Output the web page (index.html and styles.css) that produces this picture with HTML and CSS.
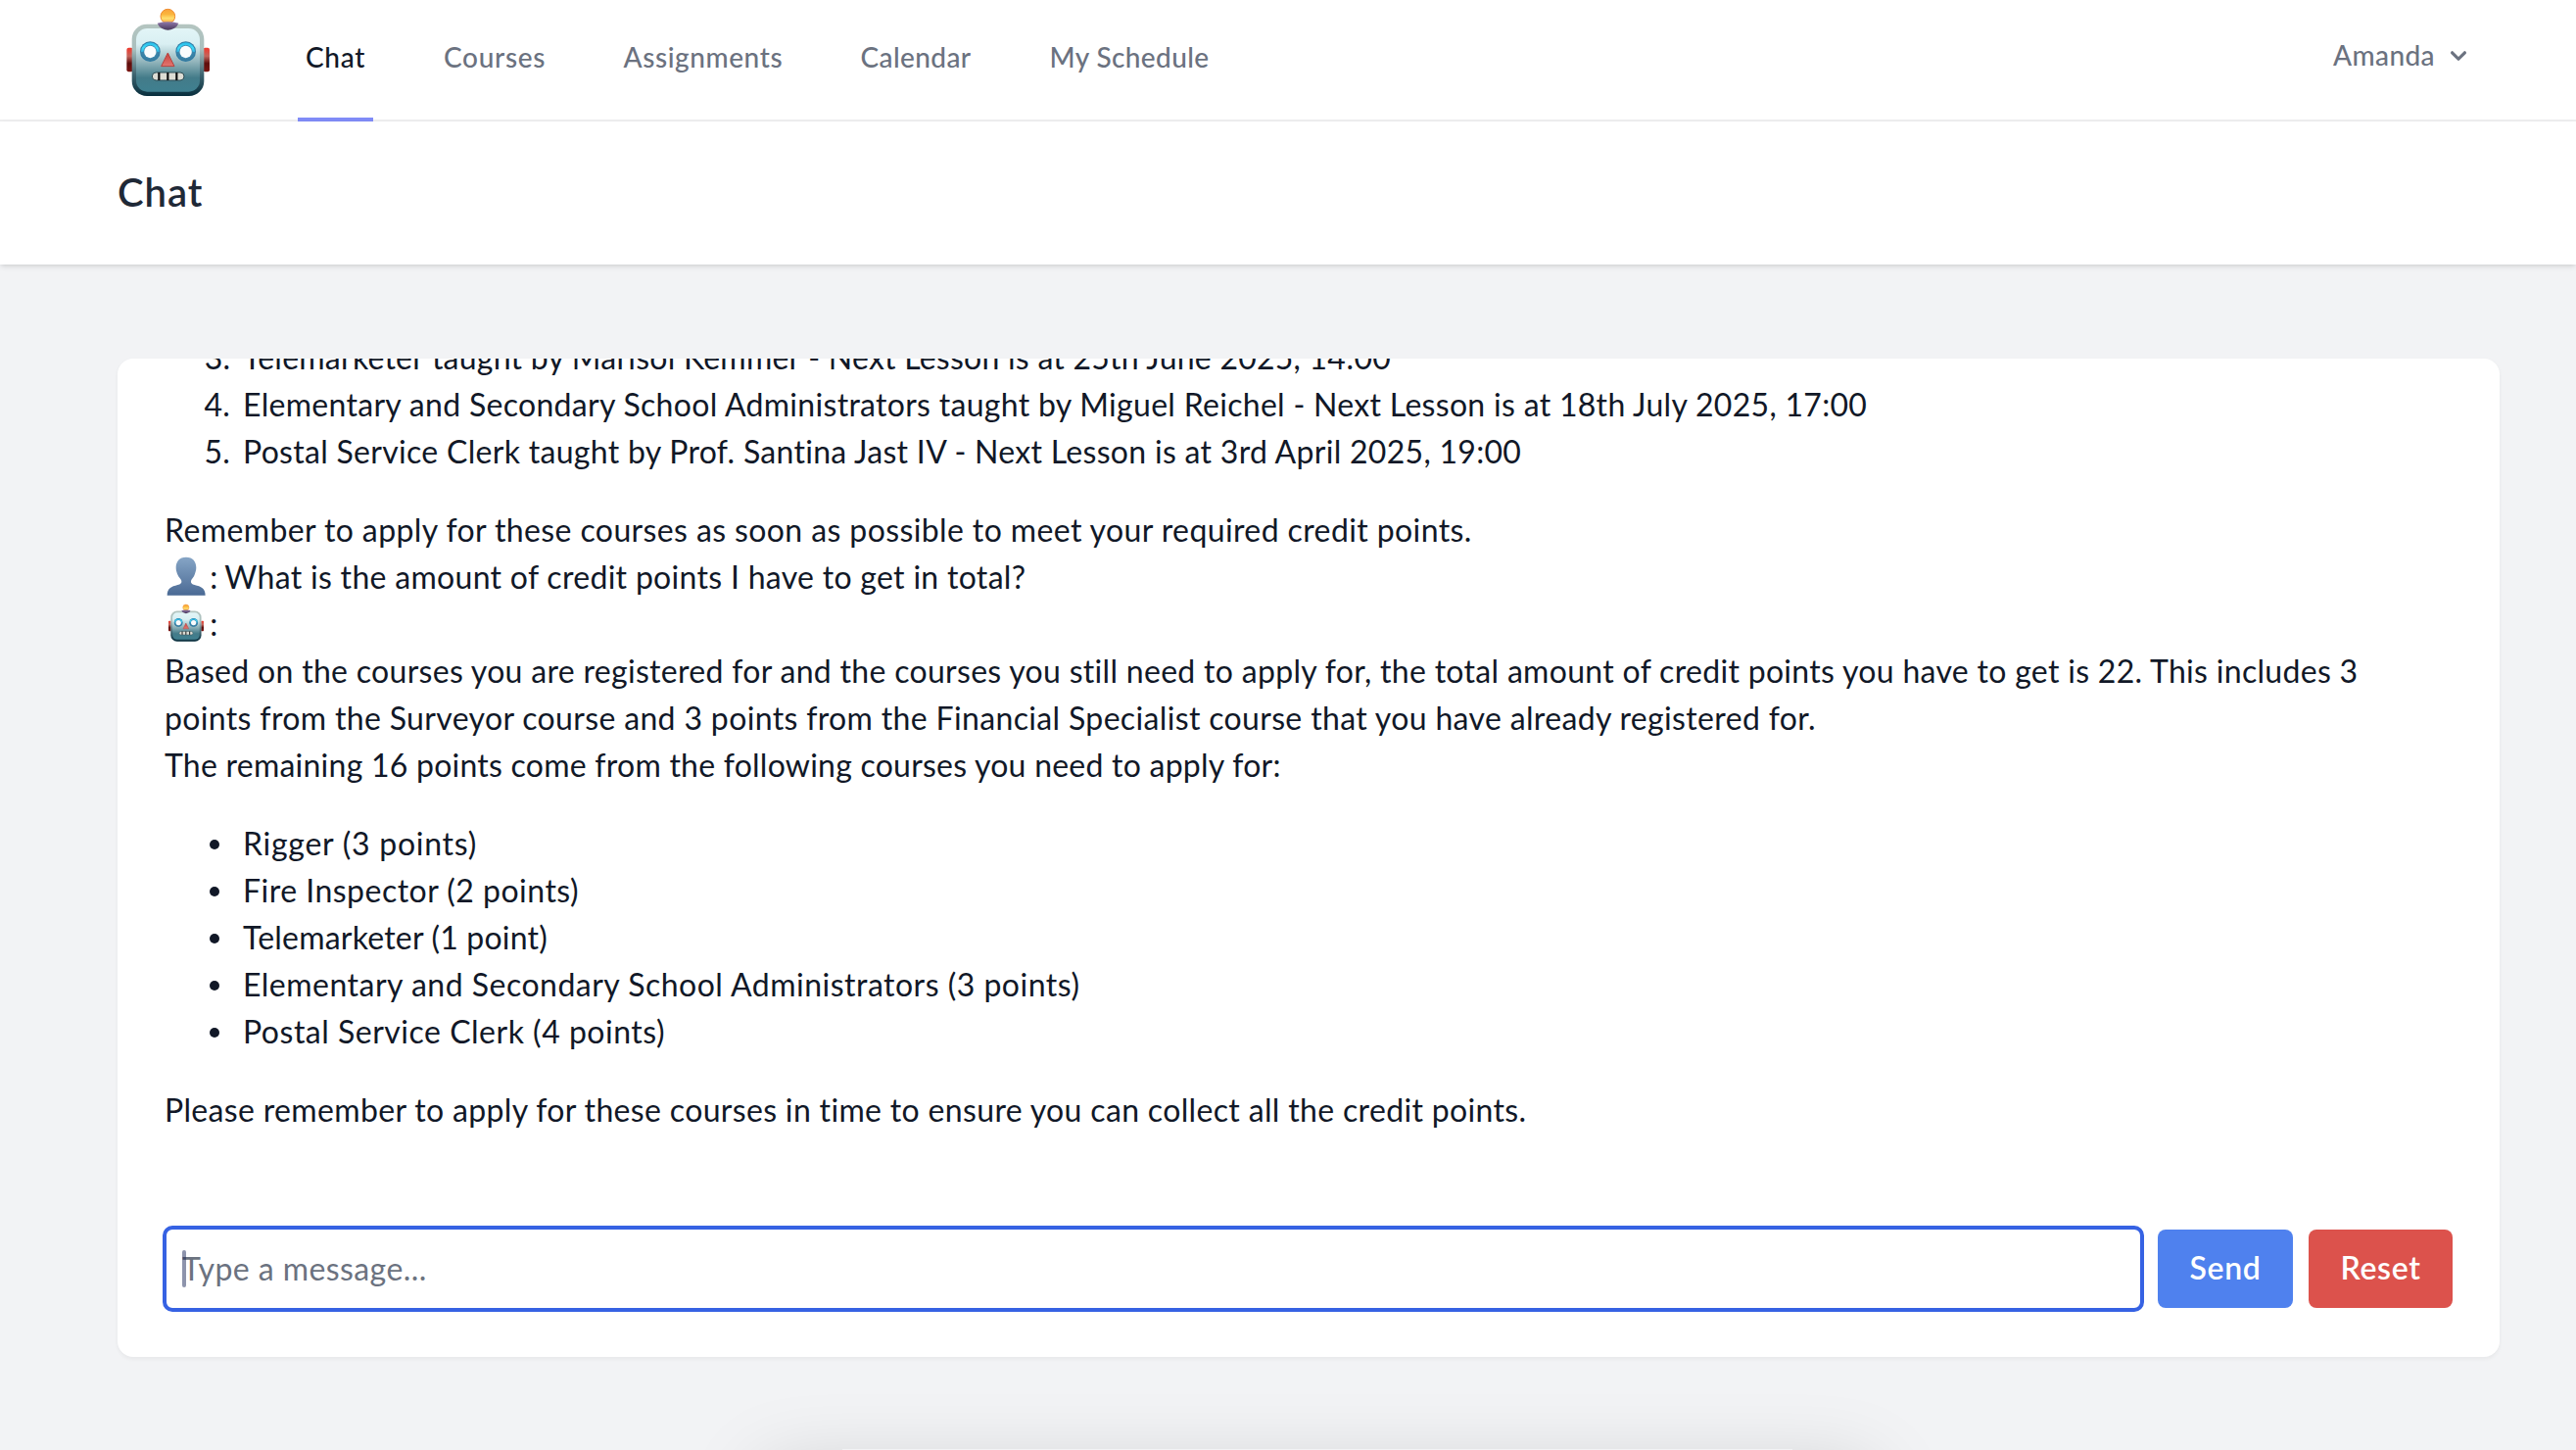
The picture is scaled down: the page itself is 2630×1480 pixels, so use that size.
FILE: index.html
```html
<!DOCTYPE html>
<html lang="en">
<head>
<meta charset="utf-8">
<title>Chat</title>
<link rel="stylesheet" href="styles.css">
</head>
<body>
<svg class="sprite" aria-hidden="true">
  <defs>
    <linearGradient id="face" x1="0" y1="0" x2="0" y2="1">
      <stop offset="0" stop-color="#e2f5f7"/><stop offset=".25" stop-color="#d9eff2"/><stop offset=".52" stop-color="#94b6bd"/><stop offset=".78" stop-color="#437b89"/><stop offset="1" stop-color="#3f8090"/>
    </linearGradient>
    <linearGradient id="rim" x1="0" y1="0" x2="0" y2="1">
      <stop offset="0" stop-color="#b4c5c0"/><stop offset=".35" stop-color="#a9bfbe"/><stop offset=".7" stop-color="#3d6470"/><stop offset="1" stop-color="#082e3d"/>
    </linearGradient>
    <linearGradient id="ear" x1="0" y1="0" x2="0" y2="1">
      <stop offset="0" stop-color="#f0382c"/><stop offset=".35" stop-color="#c4655c"/><stop offset=".65" stop-color="#5e0d0c"/><stop offset="1" stop-color="#7a1512"/>
    </linearGradient>
    <linearGradient id="bulb" x1="0" y1="0" x2="0" y2="1">
      <stop offset="0" stop-color="#f8a23c"/><stop offset=".35" stop-color="#fbb43c"/><stop offset=".65" stop-color="#ffe070"/><stop offset="1" stop-color="#f79a35"/>
    </linearGradient>
    <linearGradient id="cap" x1="0" y1="0" x2="0" y2="1">
      <stop offset="0" stop-color="#8f78ab"/><stop offset="1" stop-color="#473658"/>
    </linearGradient>
    <linearGradient id="eye" x1="0" y1="0" x2="0" y2="1">
      <stop offset="0" stop-color="#27b9e8"/><stop offset=".3" stop-color="#3fdcf8"/><stop offset=".48" stop-color="#35bce8"/><stop offset=".55" stop-color="#3a83a9"/><stop offset="1" stop-color="#3b7c9f"/>
    </linearGradient>
    <linearGradient id="nose" x1="0" y1="0" x2="0" y2="1">
      <stop offset="0" stop-color="#c8403c"/><stop offset="1" stop-color="#e27670"/>
    </linearGradient>
    <linearGradient id="bust" x1="0" y1="0" x2="0" y2="1">
      <stop offset="0" stop-color="#86a5c6"/><stop offset="1" stop-color="#4a6a94"/>
    </linearGradient>
  </defs>
  <symbol id="robot" viewBox="80 20 270 280">
    <rect x="87" y="145" width="20" height="74" rx="6" fill="url(#ear)"/>
    <rect x="321" y="145" width="20" height="74" rx="6" fill="url(#ear)"/>
    <rect x="103" y="73" width="221" height="220" rx="46" fill="url(#rim)"/>
    <rect x="116" y="86" width="195" height="194" rx="34" fill="url(#face)"/>
    <circle cx="213" cy="49" r="22" fill="url(#bulb)" stroke="#ee8b2e" stroke-width="3"/>
    <path d="M181 70Q213 62 246 70Q243 79 232 86Q213 97 195 86Q184 79 181 70Z" fill="url(#cap)"/>
    <circle cx="159" cy="157" r="31" fill="#2f7ba3"/>
    <circle cx="159" cy="157" r="28" fill="url(#eye)"/>
    <circle cx="159" cy="158" r="21" fill="#3d87ad"/>
    <circle cx="159" cy="158" r="18.500" fill="#fafcfd"/>
    <circle cx="268" cy="157" r="31" fill="#2f7ba3"/>
    <circle cx="268" cy="157" r="28" fill="url(#eye)"/>
    <circle cx="268" cy="158" r="21" fill="#3d87ad"/>
    <circle cx="268" cy="158" r="18.500" fill="#fafcfd"/>
    <path d="M213 161L233 202H193Z" fill="url(#nose)" stroke="#b6403d" stroke-width="3" stroke-linejoin="round"/>
    <rect x="165" y="221" width="98" height="24" rx="12" fill="#dcdcd4" stroke="#2b4a52" stroke-width="3"/>
    <path d="M186 221V245M213 221V245M240 221V245" stroke="#0b0d0e" stroke-width="6.500"/>
  </symbol>
  <symbol id="person" viewBox="30 24 121 121">
    <path d="M90 26C111 26 121 40 121 58C121 66 119 72 117 77C114 88 106 93 105 99C104 106 108 109 116 111C136 116 149 121 149 143H32C32 121 45 116 64 111C73 109 77 106 76 99C75 93 67 88 63 77C61 72 59 66 59 58C59 40 69 26 90 26Z" fill="url(#bust)"/>
  </symbol>
</svg>

<nav class="nav">
  <svg class="logo"><use href="#robot"/></svg>
  <div class="links">
    <a class="link active"><span class="w-chat">Chat</span></a>
    <a class="link"><span class="w-courses">Courses</span></a>
    <a class="link"><span class="w-assign">Assignments</span></a>
    <a class="link"><span class="w-cal">Calendar</span></a>
    <a class="link"><span class="w-sched">My Schedule</span></a>
  </div>
  <button class="user"><span>Amanda</span><svg class="chevron" viewBox="0 0 20 20"><path fill-rule="evenodd" d="M5.293 7.293a1 1 0 011.414 0L10 10.586l3.293-3.293a1 1 0 111.414 1.414l-4 4a1 1 0 01-1.414 0l-4-4a1 1 0 010-1.414z" clip-rule="evenodd"/></svg></button>
</nav>

<header class="header"><h2>Chat</h2></header>

<main class="main">
  <section class="card">
    <div class="messages">
      <ol start="3">
        <li class="t0">Telemarketer taught by Marisol Kemmer - Next Lesson is at 25th June 2025, 14:00</li>
        <li class="t1">Elementary and Secondary School Administrators taught by Miguel Reichel - Next Lesson is at 18th July 2025, 17:00</li>
        <li class="t2">Postal Service Clerk taught by Prof. Santina Jast IV - Next Lesson is at 3rd April 2025, 19:00</li>
      </ol>
      <p class="t3">Remember to apply for these courses as soon as possible to meet your required credit points.</p>
      <div class="who"><svg class="avatar"><use href="#person"/></svg><span class="colon">:</span><span class="t4">What is the amount of credit points I have to get in total?</span></div>
      <div class="who"><svg class="avatar bot"><use href="#robot"/></svg><span class="colon">:</span></div>
      <p><span class="t5">Based on the courses you are registered for and the courses you still need to apply for, the total amount of credit points you have to get is 22. This includes 3</span> <span class="t6">points from the Surveyor course and 3 points from the Financial Specialist course that you have already registered for.</span></p>
      <p class="t7">The remaining 16 points come from the following courses you need to apply for:</p>
      <ul>
        <li class="t8">Rigger (3 points)</li>
        <li class="t9">Fire Inspector (2 points)</li>
        <li class="t10">Telemarketer (1 point)</li>
        <li class="t11">Elementary and Secondary School Administrators (3 points)</li>
        <li class="t12">Postal Service Clerk (4 points)</li>
      </ul>
      <p class="t13">Please remember to apply for these courses in time to ensure you can collect all the credit points.</p>
    </div>
    <form class="composer">
      <div class="field"><span class="caret"></span><span class="placeholder">Type a message...</span></div>
      <button type="button" class="btn send">Send</button>
      <button type="button" class="btn reset">Reset</button>
    </form>
  </section>
</main>
<div class="window-shadow"></div>
</body>
</html>
```
FILE: styles.css
```css
* { box-sizing: border-box; margin: 0; padding: 0; }
body {
  position: relative;
  width: 2630px;
  height: 1480px;
  overflow: hidden;
  background: #f2f3f5;
  color: #111827;
  font: 400 32px/48px Lato, "Open Sans", sans-serif;
}
button { border: 0; background: none; font: inherit; }
.sprite { position: absolute; width: 0; height: 0; }

/* Top navigation */
.nav {
  display: flex;
  height: 124px;
  padding: 0 104px 0 127px;
  background: #fff;
  border-bottom: 2px solid #f0f0f1;
  font-size: 28px;
  font-weight: 500;
  color: #6b7280;
}
.logo { width: 90px; height: 93.300px; margin-top: 6.700px; flex: none; }
.links { display: flex; gap: 64px; margin-left: 87px; height: 124px; }
.link {
  display: flex;
  align-items: center;
  padding: 0 8px 4px;
  border-bottom: 4px solid transparent;
}
.link.active { color: #111827; border-color: #818cf8; }
.link span { white-space: nowrap; }
.w-chat { width: 61px; letter-spacing: .68px; }
.w-courses { width: 103.500px; letter-spacing: .7px; }
.w-assign { width: 162px; letter-spacing: .58px; }
.w-cal { width: 113px; letter-spacing: .4px; }
.w-sched { letter-spacing: .4px; }
.user {
  display: flex;
  align-items: center;
  height: 112px;
  margin-left: auto;
  color: #6b7280;
  letter-spacing: .409px;
}
.chevron { width: 32px; height: 32px; margin-left: 8px; margin-top: 2px; fill: #6b7280; }

/* Page heading */
.header {
  position: relative;
  height: 146px;
  padding: 47px 120px;
  background: #fff;
  box-shadow: 0 2px 6px rgba(0, 0, 0, .1), 0 2px 4px -2px rgba(0, 0, 0, .1);
}
.header h2 { font-size: 40px; font-weight: 600; line-height: 50px; letter-spacing: 1px; color: #1f2937; }

/* Chat card */
.main { padding: 96px 78px 0 120px; }
.card {
  display: flex;
  flex-direction: column;
  height: 1019px;
  background: #fff;
  border-radius: 16px;
  overflow: hidden;
  box-shadow: 0 2px 4px rgba(0, 0, 0, .05);
}
.messages { flex: 1; padding: 0 48px; overflow: hidden; }
.messages ol { margin: -25px 0 32px; padding-left: 80px; }
.messages ul { margin: 32px 0; padding-left: 80px; list-style: none; }
.messages ol li::marker { content: counter(list-item) ".\a0\2009"; }
.messages ul li { position: relative; }
.messages ul li::before {
  content: "";
  position: absolute;
  left: -34px;
  top: 20px;
  width: 10px;
  height: 10px;
  border-radius: 50%;
  background: #111827;
}
.messages p, .messages li { white-space: nowrap; }
.messages p span { display: block; }
.who { display: flex; align-items: center; height: 48px; }
.avatar { width: 40.300px; height: 40.300px; margin: -2px 0 0 2px; }
.avatar.bot { width: 38.250px; height: 39.700px; margin: -3px 0 0 3px; }
.colon { width: 15px; margin-left: 4px; }
.bot + .colon { margin-left: 5px; }
.t0 { letter-spacing: .239px; }
.t1 { letter-spacing: .3px; }
.t2 { letter-spacing: .295px; }
.t3 { letter-spacing: .39px; }
.t4 { letter-spacing: .3px; }
.t5 { letter-spacing: .308px; }
.t6 { letter-spacing: .346px; }
.t7 { letter-spacing: .24px; }
.t8 { letter-spacing: .742px; }
.t9 { letter-spacing: .484px; }
.t10 { letter-spacing: .205px; }
.t11 { letter-spacing: .49px; }
.t12 { letter-spacing: .505px; }
.t13 { letter-spacing: .339px; }

/* Composer */
.composer { display: flex; align-items: center; height: 180px; padding: 0 48px 0 46px; }
.field {
  position: relative;
  flex: none;
  width: 2023px;
  height: 88px;
  padding: 16px;
  border: 4px solid #3662e3;
  border-radius: 10px;
}
.placeholder { color: #6b7280; letter-spacing: .42px; }
.caret { position: absolute; left: 16px; top: 21px; width: 4px; height: 38px; border-radius: 2px; background: rgba(30, 41, 89, .5); }
.btn { height: 80px; border-radius: 8px; color: #fff; font-weight: 600; letter-spacing: .65px; padding-bottom: 2px; }
.send { width: 138px; margin-left: 14px; background: #4f81ee; }
.reset { width: 147px; margin-left: 16px; background: #dc524c; }

/* Soft shadow rising from below the page */
.window-shadow {
  position: absolute;
  left: 860px;
  bottom: 0;
  width: 970px;
  height: 1px;
  box-shadow: 0 101px 80px 80px rgba(0, 0, 0, .17);
}
```
